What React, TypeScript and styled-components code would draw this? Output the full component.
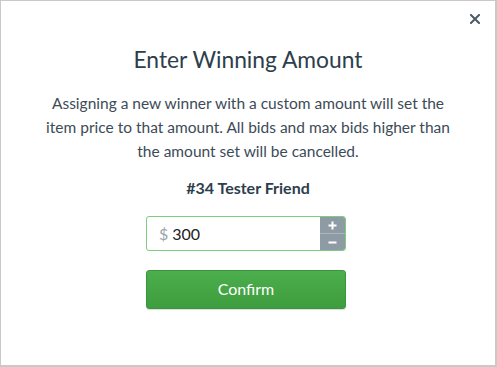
import React from "react";
import styled, { createGlobalStyle } from "styled-components";

const Global = createGlobalStyle`
  html, body { margin: 0; padding: 0; background: #fff; }
  body { font-family: Lato, "Open Sans", sans-serif; }
  * { box-sizing: border-box; }
`;

const Modal = styled.div`
  position: relative;
  width: 497px;
  height: 367px;
  border: 1px solid #c9c9c9;
  border-right-width: 2px;
  border-bottom-width: 2px;
  background: #fff;
  display: flex;
  flex-direction: column;
  align-items: center;
  padding-top: 44px;
  color: #2d3e4c;
`;

const Close = styled.button`
  position: absolute;
  top: 10px;
  right: 12px;
  width: 16px;
  height: 16px;
  padding: 0;
  border: 0;
  background: none;
  display: flex;
  align-items: center;
  justify-content: center;
`;

const Title = styled.h2`
  margin: 0;
  font-size: 22.8px;
  font-weight: 400;
  line-height: 28px;
  color: #2d3e4c;
`;

const Body = styled.p`
  margin: 18px 0 0;
  text-align: center;
  font-size: 15.5px;
  line-height: 24px;
  color: #3d4b57;
`;

const Line = styled.span`
  display: block;
  white-space: nowrap;
`;

const Name = styled.div`
  margin-top: 15px;
  font-size: 16px;
  font-weight: 700;
  line-height: 20px;
  color: #2d3e4c;
`;

const InputRow = styled.div`
  margin: 18px 4px 0 0;
  width: 200px;
  height: 35px;
  display: flex;
  border: 1px solid #7dcd7d;
  border-radius: 3px;
  overflow: hidden;
`;

const Field = styled.div`
  flex: 1;
  display: flex;
  align-items: center;
  padding-left: 12px;
  font-size: 16px;
  color: #222;
  gap: 4px;
`;

const Currency = styled.span`
  color: #98a5ae;
`;

const Stepper = styled.div`
  width: 25px;
  display: flex;
  flex-direction: column;
  background: #8e9ba4;
`;

const StepBtn = styled.div<{ $top?: boolean }>`
  flex: 1;
  display: flex;
  align-items: center;
  justify-content: center;
  border-bottom: ${(p) => (p.$top ? "1px solid #a9b4bb" : "none")};
`;

const Confirm = styled.button`
  margin: 19px 4px 0 0;
  width: 200px;
  height: 39px;
  border: 1px solid #3a963a;
  border-radius: 3px;
  background: linear-gradient(#4cae4c, #3e9d3e);
  color: #fff;
  font-family: Lato, "Open Sans", sans-serif;
  font-size: 16px;
  padding: 0 0 2px;
  box-shadow: 0 1px 1px rgba(0, 0, 0, 0.15);
`;

export default function App() {
  return (
    <>
      <Global />
      <Modal>
        <Close aria-label="close">
          <svg width="10" height="10" viewBox="0 0 10 10">
            <path d="M1 1 L9 9 M9 1 L1 9" stroke="#4b5a66" strokeWidth="2" strokeLinecap="square" />
          </svg>
        </Close>
        <Title>Enter Winning Amount</Title>
        <Body>
          <Line>Assigning a new winner with a custom amount will set the</Line>
          <Line>item price to that amount. All bids and max bids higher than</Line>
          <Line>the amount set will be cancelled.</Line>
        </Body>
        <Name>#34 Tester Friend</Name>
        <InputRow>
          <Field>
            <Currency>$</Currency>
            <span>300</span>
          </Field>
          <Stepper>
            <StepBtn $top>
              <svg width="9" height="9" viewBox="0 0 9 9">
                <path d="M4.5 0.5 V8.5 M0.5 4.5 H8.5" stroke="#fff" strokeWidth="2" />
              </svg>
            </StepBtn>
            <StepBtn>
              <svg width="9" height="9" viewBox="0 0 9 9">
                <path d="M0.5 4.5 H8.5" stroke="#fff" strokeWidth="2" />
              </svg>
            </StepBtn>
          </Stepper>
        </InputRow>
        <Confirm>Confirm</Confirm>
      </Modal>
    </>
  );
}
